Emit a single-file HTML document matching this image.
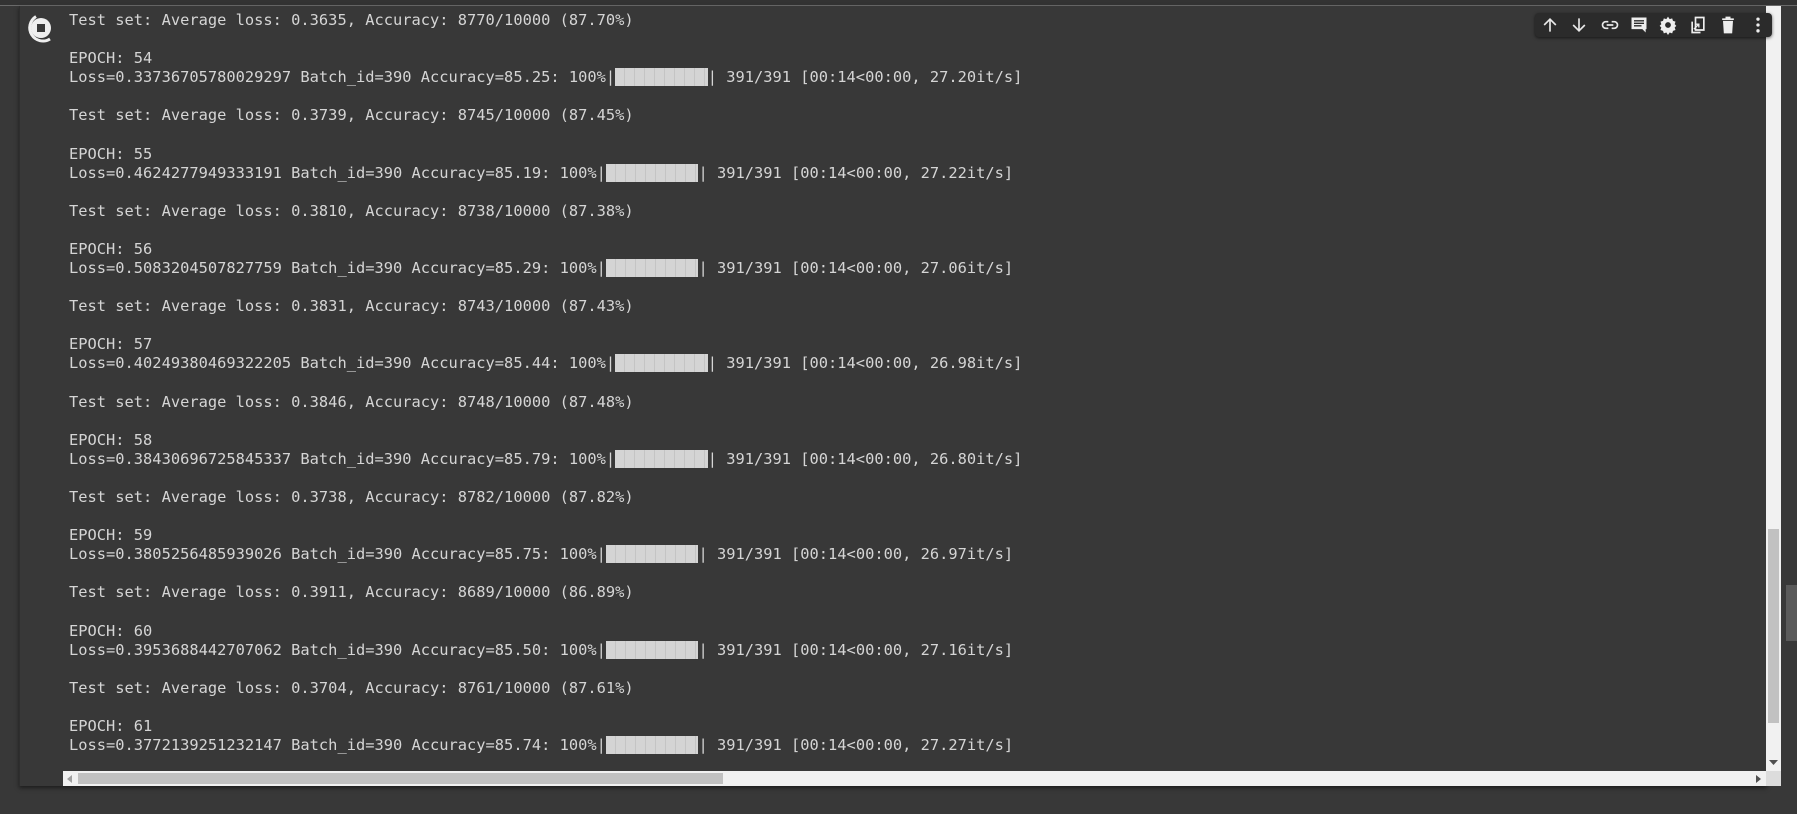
<!DOCTYPE html>
<html><head><meta charset="utf-8"><style>
html,body{margin:0;padding:0;background:#383838;width:1797px;height:814px;overflow:hidden;position:relative}
.top{position:absolute;left:0;top:0;width:1797px;height:5px;background:#333}
.topline{position:absolute;left:0;top:5px;width:1797px;height:1px;background:#6a6a6a}
.cell{position:absolute;left:19px;top:6px;width:1747px;height:780px;background:#383838;box-shadow:0 2px 4px rgba(0,0,0,.5);border-left:1px solid #2e2e2e}
.out{position:absolute;left:69px;top:11px;font-family:"DejaVu Sans Mono","Liberation Mono",monospace;font-size:15.38px;line-height:19.08px;color:#d5d5d5;white-space:pre}
.bar{display:inline-block;width:10ch;height:18px;vertical-align:-4px;background:#d4d4d4;background-image:repeating-linear-gradient(90deg,transparent 0,transparent 9px,#c4c4c4 9px,#c4c4c4 10px)}
.vs{position:absolute;left:1766px;top:6px;width:15px;height:765px;background:#f1f1f1}
.vthumb{position:absolute;left:1768px;top:529px;width:11px;height:194px;background:#c1c1c1}
.hs{position:absolute;left:63px;top:771px;width:1703px;height:15px;background:#f1f1f1}
.hthumb{position:absolute;left:78px;top:773px;width:645px;height:11px;background:#c1c1c1}
.corner{position:absolute;left:1766px;top:771px;width:15px;height:15px;background:#dcdcdc}
.outer{position:absolute;left:1786px;top:585px;width:11px;height:56px;background:#5a5a5a}
.tb{position:absolute;left:1535px;top:13px;width:237px;height:24px;background:#2b2b2b;border-radius:4px;box-shadow:0 1px 3px rgba(0,0,0,.6)}
.tb svg{position:absolute;top:2px;width:20px;height:20px}
</style></head><body>
<div class="top"></div><div class="topline"></div>
<div class="cell"></div>
<svg style="position:absolute;left:24px;top:14px" width="32" height="32" viewBox="0 0 32 32">
<path d="M26 25 A12.5 12.5 0 1 1 12 2.5" fill="none" stroke="#eee" stroke-width="3"/>
<circle cx="17" cy="14" r="10" fill="#eee"/><rect x="13" y="10" width="8" height="8" fill="#383838"/></svg>
<div class="out">Test set: Average loss: 0.3635, Accuracy: 8770/10000 (87.70%)

EPOCH: 54
Loss=0.33736705780029297 Batch_id=390 Accuracy=85.25: 100%|<span class="bar"></span>| 391/391 [00:14&lt;00:00, 27.20it/s]

Test set: Average loss: 0.3739, Accuracy: 8745/10000 (87.45%)

EPOCH: 55
Loss=0.4624277949333191 Batch_id=390 Accuracy=85.19: 100%|<span class="bar"></span>| 391/391 [00:14&lt;00:00, 27.22it/s]

Test set: Average loss: 0.3810, Accuracy: 8738/10000 (87.38%)

EPOCH: 56
Loss=0.5083204507827759 Batch_id=390 Accuracy=85.29: 100%|<span class="bar"></span>| 391/391 [00:14&lt;00:00, 27.06it/s]

Test set: Average loss: 0.3831, Accuracy: 8743/10000 (87.43%)

EPOCH: 57
Loss=0.40249380469322205 Batch_id=390 Accuracy=85.44: 100%|<span class="bar"></span>| 391/391 [00:14&lt;00:00, 26.98it/s]

Test set: Average loss: 0.3846, Accuracy: 8748/10000 (87.48%)

EPOCH: 58
Loss=0.38430696725845337 Batch_id=390 Accuracy=85.79: 100%|<span class="bar"></span>| 391/391 [00:14&lt;00:00, 26.80it/s]

Test set: Average loss: 0.3738, Accuracy: 8782/10000 (87.82%)

EPOCH: 59
Loss=0.3805256485939026 Batch_id=390 Accuracy=85.75: 100%|<span class="bar"></span>| 391/391 [00:14&lt;00:00, 26.97it/s]

Test set: Average loss: 0.3911, Accuracy: 8689/10000 (86.89%)

EPOCH: 60
Loss=0.3953688442707062 Batch_id=390 Accuracy=85.50: 100%|<span class="bar"></span>| 391/391 [00:14&lt;00:00, 27.16it/s]

Test set: Average loss: 0.3704, Accuracy: 8761/10000 (87.61%)

EPOCH: 61
Loss=0.3772139251232147 Batch_id=390 Accuracy=85.74: 100%|<span class="bar"></span>| 391/391 [00:14&lt;00:00, 27.27it/s]</div>
<div class="vs"></div><div class="vthumb"></div>
<svg style="position:absolute;left:1769px;top:760px" width="9" height="5"><path d="M0 0h9L4.5 5z" fill="#505050"/></svg>
<div class="hs"></div><div class="hthumb"></div>
<svg style="position:absolute;left:67px;top:775px" width="5" height="8"><path d="M5 0v8L0 4z" fill="#a0a0a0"/></svg>
<svg style="position:absolute;left:1756px;top:775px" width="5" height="8"><path d="M0 0v8L5 4z" fill="#505050"/></svg>
<div class="corner"></div>
<div class="outer"></div>
<div class="tb">
<svg style="left:5px" viewBox="0 0 24 24"><path d="M12 20V5M5 12l7-7 7 7" fill="none" stroke="#e8e8e8" stroke-width="2"/></svg>
<svg style="left:34px" viewBox="0 0 24 24"><path d="M12 4v15M5 12l7 7 7-7" fill="none" stroke="#e8e8e8" stroke-width="2"/></svg>
<svg style="left:65px" viewBox="0 0 24 24"><path d="M10 8H7a4 4 0 0 0 0 8h3M14 8h3a4 4 0 0 1 0 8h-3M8 12h8" fill="none" stroke="#e8e8e8" stroke-width="2"/></svg>
<svg style="left:94px" viewBox="0 0 24 24"><path d="M3 3h18v14h-1v4l-4-4H3z" fill="#eee"/><path d="M6 7h12M6 10h12M6 13h9" stroke="#2b2b2b" stroke-width="1.6"/></svg>
<svg style="left:123px" viewBox="0 0 24 24"><path d="M12 2l2 3 3-1 1 3 3 1-1 3 2 2-2 2 1 3-3 1-1 3-3-1-2 3-2-3-3 1-1-3-3-1 1-3-2-2 2-2-1-3 3-1 1-3 3 1z" fill="#eee"/><circle cx="12" cy="12" r="3.5" fill="#2b2b2b"/></svg>
<svg style="left:153px" viewBox="0 0 24 24"><path d="M9 3h10v15H9zM5 8v13h10" fill="none" stroke="#eee" stroke-width="2"/><path d="M7 17l6-6M9 11h4v4" fill="none" stroke="#eee" stroke-width="1.6"/></svg>
<svg style="left:183px" viewBox="0 0 24 24"><path d="M5 4h14v2H5zM9 2h6v2H9zM6 7h12l-1 15H7z" fill="#eee"/></svg>
<svg style="left:213px" viewBox="0 0 24 24"><circle cx="12" cy="5" r="2" fill="#eee"/><circle cx="12" cy="12" r="2" fill="#eee"/><circle cx="12" cy="19" r="2" fill="#eee"/></svg>
</div>
</body></html>
